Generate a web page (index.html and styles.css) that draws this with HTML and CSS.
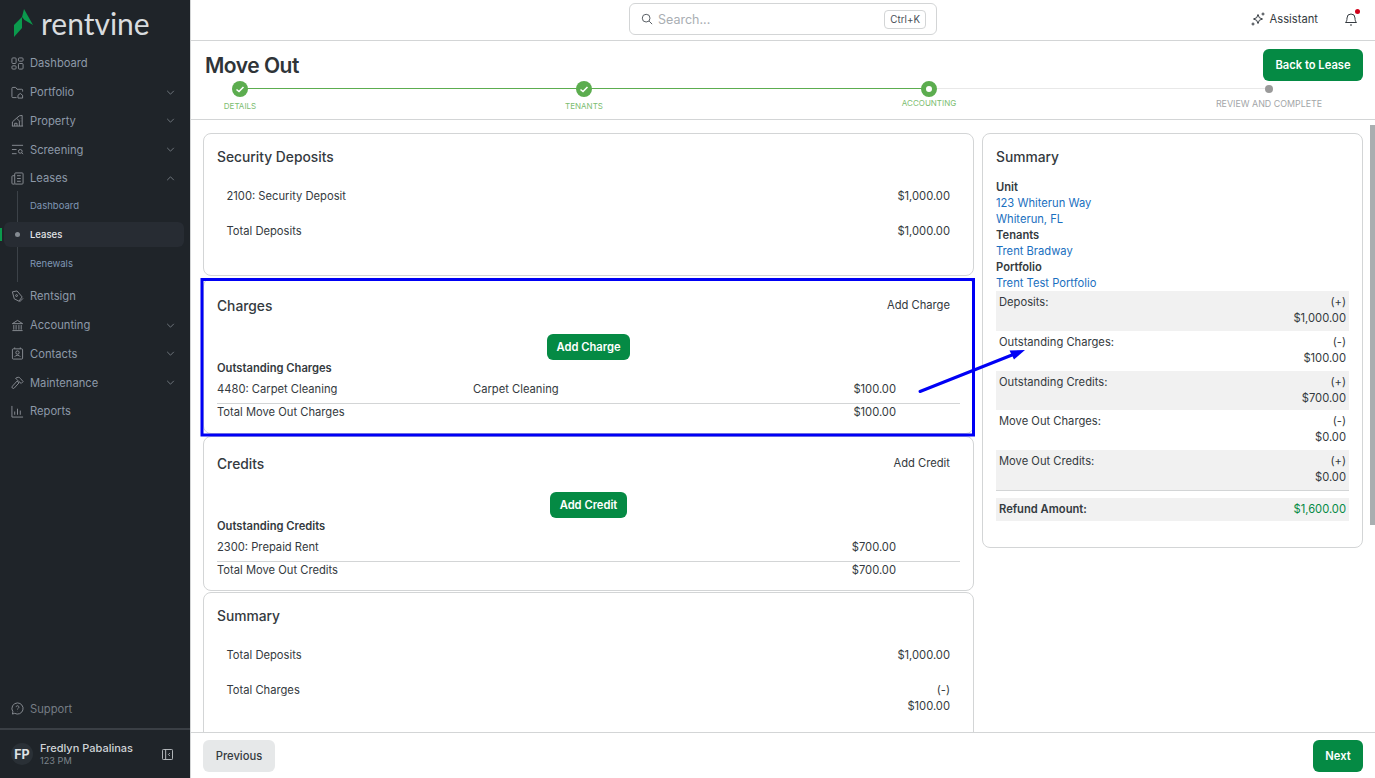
FILE: index.html
```html
<!DOCTYPE html>
<html lang="en">
<head>
    <meta charset="UTF-8">
    <title>Move Out</title>
    <link rel="stylesheet" href="styles.css">
</head>
<body>
    <aside class="sidebar">
        <div class="logo">
            <svg width="20" height="28" viewBox="0 0 20 28"><path fill="#0b9a4d" d="M10 0l9 16-8.500-5L8 8zM0 16l8-8v11l-8 9z"/></svg>
            <span class="logo-text">rentvine</span>
        </div>
        <nav class="nav">
            <a class="nav-item">
                <svg class="nav-icon" viewBox="0 0 14 14"><rect x="1" y="1" width="4.500" height="6" rx="1"/><rect x="8" y="1" width="5" height="3.500" rx="1"/><rect x="1" y="9.500" width="4.500" height="3.500" rx="1"/><rect x="8" y="7" width="5" height="6" rx="1"/></svg>
                Dashboard
            </a>
            <a class="nav-item">
                <svg class="nav-icon" viewBox="0 0 14 14"><path d="M6 12.500H2a1 1 0 0 1-1-1v-9a1 1 0 0 1 1-1h3l1.500 2h5a1 1 0 0 1 1 1V6"/><path d="M7.500 10l2.500-2 2.500 2v3h-5z"/></svg>
                Portfolio
                <svg class="chevron" viewBox="0 0 10 6"><path d="M1 1l4 4 4-4"/></svg>
            </a>
            <a class="nav-item">
                <svg class="nav-icon" viewBox="0 0 14 14"><path d="M1 13h12M1.500 13V8.500L6 4.500l3 3V13M6 4.500L9 2l3-.500V13M4 13v-3h2.500v3M10.500 4.500h.500M10.500 7.500h.500"/></svg>
                Property
                <svg class="chevron" viewBox="0 0 10 6"><path d="M1 1l4 4 4-4"/></svg>
            </a>
            <a class="nav-item">
                <svg class="nav-icon" viewBox="0 0 14 14"><path d="M1 2.500h12M1 7h5M1 11.500h5"/><circle cx="10" cy="9" r="2"/><path d="M11.500 10.500l1.500 1.500"/></svg>
                Screening
                <svg class="chevron" viewBox="0 0 10 6"><path d="M1 1l4 4 4-4"/></svg>
            </a>
            <a class="nav-item">
                <svg class="nav-icon" viewBox="0 0 14 14"><rect x="4" y="1" width="9" height="12" rx="1"/><path d="M4 4H2a1 1 0 0 0-1 1v7a1 1 0 0 0 1 1h2M6.500 4h4M6.500 7h4M6.500 10h4"/></svg>
                Leases
                <svg class="chevron" viewBox="0 0 10 6"><path d="M1 5l4-4 4 4"/></svg>
            </a>
            <div class="subnav">
                <a class="sub-item">Dashboard</a>
                <a class="sub-item sub-active"><span class="sub-dot"></span>Leases</a>
                <a class="sub-item">Renewals</a>
            </div>
            <a class="nav-item">
                <svg class="nav-icon" viewBox="0 0 14 14"><path d="M1.500 2l5-1 5.500 6.500-3.500 4.500-5-2.500z"/><circle cx="6" cy="6" r="1"/><path d="M9 13l4-4"/></svg>
                Rentsign
            </a>
            <a class="nav-item">
                <svg class="nav-icon" viewBox="0 0 14 14"><path d="M1.500 5L7 1.500 12.500 5zM3 6.500v5M5.500 6.500v5M8.500 6.500v5M11 6.500v5M1.500 12.500h11"/></svg>
                Accounting
                <svg class="chevron" viewBox="0 0 10 6"><path d="M1 1l4 4 4-4"/></svg>
            </a>
            <a class="nav-item">
                <svg class="nav-icon" viewBox="0 0 14 14"><rect x="1.500" y="2" width="11" height="11" rx="1"/><path d="M4 .500V2M10 .500V2M4 10.500c.500-2 5.500-2 6 0"/><circle cx="7" cy="6" r="1.800"/></svg>
                Contacts
                <svg class="chevron" viewBox="0 0 10 6"><path d="M1 1l4 4 4-4"/></svg>
            </a>
            <a class="nav-item">
                <svg class="nav-icon" viewBox="0 0 14 14"><path d="M1.500 11l5-5.500 2 2-5 5.500a1 1 0 0 1-2-2zM5 2.500c2-1.500 4-1.500 5 0l3 3.500-2 2-2.500-2-2-2z"/></svg>
                Maintenance
                <svg class="chevron" viewBox="0 0 10 6"><path d="M1 1l4 4 4-4"/></svg>
            </a>
            <a class="nav-item">
                <svg class="nav-icon" viewBox="0 0 14 14"><path d="M1 1v12h12M4 10.500V7M7 10.500V4M10 10.500V6"/></svg>
                Reports
            </a>
        </nav>
        <a class="nav-item support">
            <svg class="nav-icon" viewBox="0 0 14 14"><path d="M7 1a6 6 0 1 1-3 11.200L1.500 13l.600-2.500A6 6 0 0 1 7 1z"/><path d="M5.500 5.500a1.500 1.500 0 1 1 2.300 1.300C7.200 7.200 7 7.500 7 8M7 10v.200"/></svg>
            Support
        </a>
        <div class="user">
            <span class="avatar">FP</span>
            <div class="user-info">
                <div class="user-name">Fredlyn Pabalinas</div>
                <div class="user-org">123 PM</div>
            </div>
            <svg class="collapse" viewBox="0 0 12 12"><rect x=".500" y=".500" width="11" height="11" rx="1"/><path d="M4 .500v11M8.500 4.500L7 6l1.500 1.500"/></svg>
        </div>
    </aside>

    <div class="page">
        <header class="topbar">
            <div class="search">
                <svg class="search-icon" viewBox="0 0 14 14"><circle cx="6" cy="6" r="4.500"/><path d="M9.500 9.500L13 13"/></svg>
                <span class="search-text">Search...</span>
                <span class="kbd">Ctrl+K</span>
            </div>
            <div class="topbar-right">
                <a class="assistant">
                    <svg class="assistant-icon" viewBox="0 0 14 14"><path d="M7 2.500l1.300 3.200L11.500 7 8.300 8.300 7 11.500 5.700 8.300 2.500 7l3.200-1.300zM12 .500v3M10.500 2h3M2 10.500v3M.500 12h3"/></svg>
                    Assistant
                </a>
                <span class="bell">
                    <svg class="bell-icon" viewBox="0 0 14 14"><path d="M1.500 10.500c1-1 1.500-2 1.500-4.500a4 4 0 0 1 8 0c0 2.500.500 3.500 1.500 4.500zM6 13h2"/></svg>
                    <span class="bell-dot"></span>
                </span>
            </div>
        </header>

        <section class="page-head">
            <div class="title-row">
                <h1>Move Out</h1>
                <button class="btn btn-back">Back to Lease</button>
            </div>
            <div class="stepper">
                <div class="step">
                    <span class="step-mark done"><svg viewBox="0 0 16 16"><path d="M4.500 8.500l2.500 2 4.500-4.500"/></svg></span>
                    <span class="step-label">DETAILS</span>
                </div>
                <div class="step">
                    <span class="step-mark done"><svg viewBox="0 0 16 16"><path d="M4.500 8.500l2.500 2 4.500-4.500"/></svg></span>
                    <span class="step-label">TENANTS</span>
                </div>
                <div class="step step-current">
                    <span class="step-mark current"></span>
                    <span class="step-label">ACCOUNTING</span>
                </div>
                <div class="step step-todo">
                    <span class="step-mark todo"></span>
                    <span class="step-label">REVIEW AND COMPLETE</span>
                </div>
            </div>
        </section>

        <main class="content">
            <div class="left-col">
                <section class="card card-deposits">
                    <h2>Security Deposits</h2>
                    <div class="kv-row"><span>2100: Security Deposit</span><span>$1,000.00</span></div>
                    <div class="kv-row"><span>Total Deposits</span><span>$1,000.00</span></div>
                </section>

                <section class="card card-charges">
                    <div class="card-head">
                        <h2>Charges</h2>
                        <a class="card-link">Add Charge</a>
                    </div>
                    <div class="center-btn"><button class="btn btn-small">Add Charge</button></div>
                    <div class="group-title">Outstanding Charges</div>
                    <div class="line-row">
                        <span class="line-name">4480: Carpet Cleaning</span>
                        <span class="line-desc">Carpet Cleaning</span>
                        <span class="line-amt">$100.00</span>
                    </div>
                    <div class="line-row line-total">
                        <span class="line-name">Total Move Out Charges</span>
                        <span class="line-desc"></span>
                        <span class="line-amt">$100.00</span>
                    </div>
                </section>

                <section class="card card-credits">
                    <div class="card-head">
                        <h2>Credits</h2>
                        <a class="card-link">Add Credit</a>
                    </div>
                    <div class="center-btn"><button class="btn btn-small">Add Credit</button></div>
                    <div class="group-title">Outstanding Credits</div>
                    <div class="line-row">
                        <span class="line-name">2300: Prepaid Rent</span>
                        <span class="line-desc"></span>
                        <span class="line-amt">$700.00</span>
                    </div>
                    <div class="line-row line-total">
                        <span class="line-name">Total Move Out Credits</span>
                        <span class="line-desc"></span>
                        <span class="line-amt">$700.00</span>
                    </div>
                </section>

                <section class="card card-summary">
                    <h2>Summary</h2>
                    <div class="kv-row"><span>Total Deposits</span><span>$1,000.00</span></div>
                    <div class="kv-row"><span>Total Charges</span><span class="kv-stack">(-)<br>$100.00</span></div>
                </section>
            </div>

            <aside class="card side-card">
                <h2>Summary</h2>
                <div class="info">
                    <div class="info-label">Unit</div>
                    <a class="info-link">123 Whiterun Way</a>
                    <a class="info-link">Whiterun, FL</a>
                    <div class="info-label">Tenants</div>
                    <a class="info-link">Trent Bradway</a>
                    <div class="info-label">Portfolio</div>
                    <a class="info-link">Trent Test Portfolio</a>
                </div>
                <div class="sum-row shaded"><span>Deposits:</span><span class="sum-val">(+)<br>$1,000.00</span></div>
                <div class="sum-row"><span>Outstanding Charges:</span><span class="sum-val">(-)<br>$100.00</span></div>
                <div class="sum-row shaded"><span>Outstanding Credits:</span><span class="sum-val">(+)<br>$700.00</span></div>
                <div class="sum-row"><span>Move Out Charges:</span><span class="sum-val">(-)<br>$0.00</span></div>
                <div class="sum-row shaded"><span>Move Out Credits:</span><span class="sum-val">(+)<br>$0.00</span></div>
                <div class="sum-rule"></div>
                <div class="sum-row shaded refund"><span>Refund Amount:</span><span class="refund-val">$1,600.00</span></div>
            </aside>
            <div class="scroll-thumb"></div>
        </main>

        <footer class="footer">
            <button class="btn btn-prev">Previous</button>
            <button class="btn btn-next">Next</button>
        </footer>
    </div>

    <!-- Annotation drawn over the screenshot -->
    <svg class="annotation" width="1375" height="778" viewBox="0 0 1375 778">
        <rect x="202" y="279.500" width="771.500" height="155.500" fill="none" stroke="#0000f5" stroke-width="3"/>
        <path d="M920 391.500L1012 355" stroke="#0000f5" stroke-width="3" stroke-linecap="round"/>
        <path d="M1025 350l-15.500 .500 4.500 9z" fill="#0000f5"/>
    </svg>
</body>
</html>
```

FILE: styles.css
```css
* {
    box-sizing: border-box;
}
html, body {
    height: 100%;
}
body {
    margin: 0;
    display: flex;
    overflow: hidden;
    font-family: Inter, "Liberation Sans", sans-serif;
    font-size: 11.200px;
    color: #343a40;
    background-color: #fff;
}
h1, h2 {
    margin: 0;
}
button {
    font-family: inherit;
    border: none;
    cursor: pointer;
}

/* Sidebar */
.sidebar {
    width: 190px;
    flex: none;
    display: flex;
    flex-direction: column;
    background-color: #1f2429;
    color: #8d99a8;
}
.logo {
    height: 49px;
    padding: 9px 0 0 14px;
    display: flex;
    align-items: flex-start;
    gap: 7px;
}
.logo-text {
    font-family: Lato, sans-serif;
    font-size: 30px;
    line-height: 28px;
    color: #d9dcdf;
}
.nav {
    flex: 1;
}
.nav-item {
    height: 28.750px;
    padding: 0 14px 0 11px;
    display: flex;
    align-items: center;
    gap: 6px;
    font-size: 11.200px;
    color: #8d99a8;
}
.nav-icon {
    width: 13px;
    height: 13px;
    flex: none;
    fill: none;
    stroke: #8b9096;
    stroke-width: 1;
}
.chevron {
    width: 9px;
    height: 5px;
    margin-left: auto;
    margin-right: 1px;
    fill: none;
    stroke: #7d848b;
    stroke-width: 1;
}
.subnav {
    margin-top: -2px;
    margin-left: 17px;
    border-left: 1px solid #3c4248;
    height: 91.250px;
}
.sub-item {
    height: 29px;
    padding-left: 12px;
    display: flex;
    align-items: center;
    font-size: 9.500px;
    color: #7f97b5;
}
.sub-active {
    position: relative;
    margin-left: -14px;
    margin-right: 6px;
    height: 25px;
    margin-top: 2px;
    margin-bottom: 2px;
    padding-left: 11px;
    border-radius: 6px;
    background-color: #272c33;
    color: #e4e7ea;
    font-weight: 500;
}
.sub-active::before {
    content: "";
    position: absolute;
    left: -4px;
    top: 6px;
    width: 2px;
    height: 13px;
    background-color: #0b9a4d;
}
.sub-dot {
    width: 5px;
    height: 5px;
    margin-right: 10px;
    border-radius: 50%;
    background-color: #858b92;
}
.support {
    margin-bottom: 5px;
    color: #757c84;
}
.user {
    height: 50px;
    padding: 0 17px 0 11px;
    display: flex;
    align-items: center;
    gap: 7px;
    border-top: 2px solid #3a3f45;
}
.avatar {
    width: 22px;
    height: 22px;
    flex: none;
    display: flex;
    align-items: center;
    justify-content: center;
    border-radius: 50%;
    background-color: #2a3036;
    color: #dfe2e5;
    font-size: 12.500px;
    font-weight: 700;
}
.user-info {
    flex: 1;
}
.user-name {
    font-size: 11px;
    font-weight: 500;
    line-height: 14px;
    color: #cfd3d7;
}
.user-org {
    font-size: 9.200px;
    line-height: 12px;
    color: #7c838a;
}
.collapse {
    width: 11px;
    height: 11px;
    fill: none;
    stroke: #c4c8cc;
    stroke-width: 1;
}

/* Main column */
.page {
    flex: 1;
    min-width: 0;
    display: flex;
    flex-direction: column;
    position: relative;
    border-left: 1px solid #d3d5d6;
}
.topbar {
    height: 41px;
    flex: none;
    display: flex;
    align-items: center;
    justify-content: center;
    position: relative;
    padding-bottom: 2px;
    border-bottom: 1px solid #d3d5d6;
}
.search {
    width: 308px;
    height: 32px;
    padding: 0 10px 0 11px;
    display: flex;
    align-items: center;
    border: 1px solid #d3d5d6;
    border-radius: 6px;
}
.search-icon {
    width: 12px;
    height: 12px;
    margin-right: 5px;
    fill: none;
    stroke: #50565c;
    stroke-width: 1.100;
}
.search-text {
    flex: 1;
    font-size: 12.500px;
    color: #a9aeb3;
}
.kbd {
    height: 19px;
    padding: 0 5px;
    display: flex;
    align-items: center;
    font-size: 9.800px;
    border: 1px solid #d3d5d6;
    border-radius: 4px;
    color: #495057;
}
.topbar-right {
    position: absolute;
    right: 17px;
    top: 0;
    height: 38px;
    display: flex;
    align-items: center;
    gap: 26px;
}
.assistant {
    display: flex;
    align-items: center;
    gap: 5px;
    font-size: 11.200px;
    color: #343a40;
}
.assistant-icon {
    width: 14px;
    height: 14px;
    fill: none;
    stroke: #343a40;
    stroke-width: 1;
}
.bell {
    position: relative;
    display: flex;
}
.bell-icon {
    width: 14px;
    height: 14px;
    fill: none;
    stroke: #343a40;
    stroke-width: 1;
}
.bell-dot {
    position: absolute;
    right: -2px;
    top: -3px;
    width: 5px;
    height: 5px;
    border-radius: 50%;
    background-color: #d0021b;
}

/* Title and stepper */
.page-head {
    height: 79px;
    flex: none;
    padding: 8px 12px 0 13px;
    border-bottom: 1px solid #d3d5d6;
}
.title-row {
    display: flex;
    justify-content: space-between;
    align-items: flex-start;
    height: 32px;
}
h1 {
    font-size: 21px;
    font-weight: 600;
    line-height: 32px;
    letter-spacing: -0.5px;
    margin: 1px 0 0 1px;
    color: #2f3438;
}
.btn {
    border-radius: 6px;
    font-size: 11.200px;
    font-weight: 600;
    color: #fff;
    background-color: #058a44;
}
.btn-back {
    width: 100px;
    height: 32px;
}
.stepper {
    display: grid;
    grid-template-columns: 344px 345px 340px 1px;
    margin-left: 36px;
}
.step {
    position: relative;
    display: flex;
    flex-direction: column;
    align-items: flex-start;
}
.step::after {
    content: "";
    position: absolute;
    left: 0;
    top: 7px;
    width: 100%;
    height: 1px;
    background-color: #5cad4f;
}
.step-current::after {
    background-color: #e8e8e8;
}
.step-todo::after {
    display: none;
}
.step-mark {
    position: relative;
    z-index: 1;
    width: 16px;
    height: 16px;
    margin-left: -8px;
    border-radius: 50%;
}
.step-mark svg {
    display: block;
    fill: none;
    stroke: #fff;
    stroke-width: 1.600;
}
.done {
    background-color: #5cad4f;
}
.current {
    background-color: #fff;
    border: 5px solid #5cad4f;
}
.todo {
    width: 8px;
    height: 8px;
    margin-left: -4px;
    margin-top: 4px;
    background-color: #9a9a9a;
}
.step-label {
    margin-top: 4px;
    font-size: 8px;
    line-height: 10px;
    white-space: nowrap;
    transform: translateX(-50%);
    color: #7cbd70;
}
.step-current .step-label {
    margin-top: 1px;
}
.step-todo .step-label {
    margin-top: 6px;
    font-size: 8.900px;
    color: #a3a6a8;
}

/* Cards */
.content {
    flex: 1;
    min-height: 0;
    overflow: hidden;
    position: relative;
    display: flex;
    align-items: flex-start;
    gap: 8px;
    padding: 13px 12px 0;
}
.left-col {
    width: 771px;
    flex: none;
    display: flex;
    flex-direction: column;
    gap: 2px;
}
.card {
    border: 1px solid #d3d5d6;
    border-radius: 8px;
    background-color: #fff;
}
h2 {
    font-size: 13.800px;
    font-weight: 500;
    line-height: 20px;
    color: #343a40;
}
.card-deposits {
    height: 143px;
    padding: 13px 23px 0 13px;
}
.card-summary {
    height: 160px;
    padding: 13px 23px 0 13px;
}
.kv-row {
    display: flex;
    justify-content: space-between;
    padding-left: 9.500px;
    line-height: 16px;
    margin-top: 19px;
}
.card-deposits h2,
.card-summary h2 {
    margin-bottom: 21px;
}
.kv-stack {
    text-align: right;
}
.card-charges {
    height: 156px;
    padding: 17px 13px 0;
}
.card-credits {
    height: 155px;
    margin-bottom: -1px;
    padding: 17px 13px 0;
}
.card-head {
    display: flex;
    justify-content: space-between;
    align-items: center;
    padding-right: 10px;
}
.card-link {
    margin-bottom: 2px;
    font-size: 11.200px;
    color: #343a40;
}
.center-btn {
    margin-top: 18px;
    display: flex;
    justify-content: center;
}
.btn-small {
    height: 26px;
    padding: 0 9.500px;
}
.group-title {
    font-weight: 600;
    line-height: 16px;
}
.line-row {
    display: flex;
    line-height: 16px;
    padding: 5px 0 6px;
}
.line-total {
    padding: 0;
    border-top: 1px solid #d3d5d6;
}
.line-name {
    width: 256px;
}
.line-desc {
    flex: 1;
}
.line-amt {
    width: 63px;
    margin-right: 64px;
    text-align: right;
}

/* Right summary */
.side-card {
    width: 381px;
    height: 415px;
    flex: none;
    padding: 13px 13px 0;
}
.info {
    margin-top: 12px;
    line-height: 16px;
}
.info-label {
    font-weight: 600;
}
.info-link {
    display: block;
    color: #1a6fc0;
}
.sum-row {
    display: flex;
    justify-content: space-between;
    height: 39.800px;
    padding: 3px 3px 0;
    line-height: 16px;
}
.shaded {
    background-color: #f1f1f1;
}
.sum-val {
    text-align: right;
}
.sum-rule {
    height: 1px;
    margin-bottom: 7px;
    background-color: #d3d5d6;
}
.refund {
    height: 23px;
    font-weight: 600;
}
.refund-val {
    font-weight: 400;
    color: #058a44;
}
.scroll-thumb {
    position: absolute;
    right: 0;
    top: 5px;
    width: 5px;
    height: 400px;
    background-color: #a9aeb0;
}

/* Footer */
.footer {
    height: 46px;
    flex: none;
    display: flex;
    align-items: center;
    justify-content: space-between;
    padding: 0 12px;
    border-top: 1px solid #d3d5d6;
}
.btn-prev {
    width: 72px;
    height: 32px;
    font-weight: 500;
    color: #343a40;
    background-color: #e6e8e9;
}
.btn-next {
    width: 50px;
    height: 32px;
}

.annotation {
    position: absolute;
    left: 0;
    top: 0;
    pointer-events: none;
}
```
